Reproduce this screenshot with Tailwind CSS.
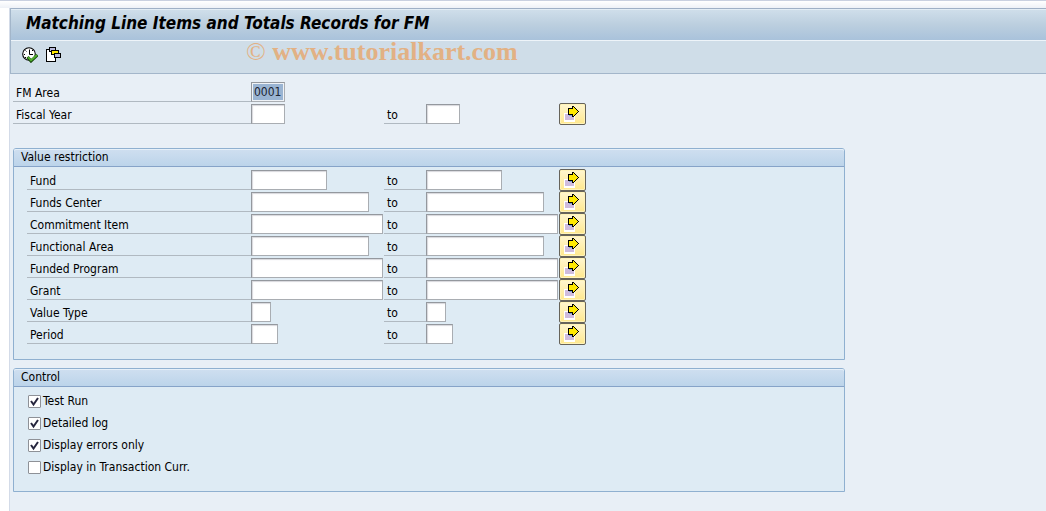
<!DOCTYPE html>
<html lang="en">
<head>
<meta charset="utf-8">
<title>Matching Line Items and Totals Records for FM</title>
<script src="https://cdn.jsdelivr.net/npm/@tailwindcss/browser@4"></script>
</head>
<body class="min-h-screen bg-white font-['DejaVu_Sans_Condensed','DejaVu_Sans',sans-serif] text-[12px] leading-4 text-black">

<svg class="hidden" aria-hidden="true">
  <symbol id="multi" viewBox="0 0 16 16" shape-rendering="crispEdges">
    <path fill="#fff" d="M0 7h11v9H0z"/>
    <path fill="#cfbcdd" d="M1 8h9v6H1z"/>
    <path fill="#7ba3d8" d="M5 8h5v2H5z"/>
    <path fill="#000" d="M8 0h2v1h1v1h1v1h1v1h1v1h1v1h-1v1h-1v1h-1v1h-1v1h-1v1H8V9H4V2h4z"/>
    <path fill="#ffe900" d="M9 1h1v1h1v1h1v1h1v1h1v1h-1v1h-1v1h-1v1h-1v1H9V8H5V3h4z"/>
  </symbol>
  <symbol id="tick" viewBox="0 0 13 13">
    <path fill="none" stroke="#26263e" stroke-width="2" d="M3 6l2.500 3.500L10 3"/>
  </symbol>
</svg>

<div class="h-2 border-t border-[#c9d0e0] bg-linear-to-b from-white to-[#eef1f7]"></div>

<main class="ml-[9px] min-h-[calc(100vh-8px)] border-l border-[#d3dbe8] bg-[#e8eff6]">
  <header class="relative border-l border-[#a3b6ca]">
    <div class="h-8 border-t border-[#9fb0c6] bg-linear-to-b from-[#d0dfeb] via-[#bccfdf] to-[#a9c2db] pl-[15px] pt-px shadow-[inset_0_1px_0_#e3edf5]">
      <h1 class="text-[17px] font-bold italic leading-[26px]">Matching Line Items and Totals Records for FM</h1>
    </div>
    <div class="flex h-[34px] items-center gap-2 border-b border-t border-b-[#a3b6ca] border-t-[#eef4f9] bg-[#cfdde8] pb-1 pl-[11px]">
      <button type="button" aria-label="Execute" class="size-4">
        <svg class="size-4" viewBox="0 0 16 16">
          <circle cx="7" cy="7" r="6.300" fill="#fff" stroke="#000" stroke-width="1.100"/>
          <path d="M7.500 2.500v5h3.500" fill="none" stroke="#000" stroke-width="1"/>
          <path d="M2 7.500h1M7.500 11v1M3.500 3.500l1 1M10 4l1-1M4 10l-1 1" stroke="#000" stroke-width="1"/>
          <path d="M5.500 10l3.500 4L15.500 8" fill="none" stroke="#123f08" stroke-width="3"/>
          <path d="M6 10.200l3 3.300L15 8" fill="none" stroke="#4fae2b" stroke-width="1.900"/>
        </svg>
      </button>
      <button type="button" aria-label="Get variant" class="size-4">
        <svg class="size-4" viewBox="0 0 16 16" shape-rendering="crispEdges">
          <path fill="#000" d="M0 2h10v13H0z"/>
          <path fill="#fff" d="M1 3h8v11H1z"/>
          <path fill="#000" d="M3 0h7v5H3z"/>
          <path fill="#b9b9dc" d="M4 1h5v3H4z"/>
          <path fill="#000" d="M5 3h8v5H5z"/>
          <path fill="#ffe900" d="M6 4h6v3H6z"/>
          <path fill="#000" d="M8 6h7v5H8z"/>
          <path fill="#b9b9dc" d="M9 7h5v3H9z"/>
        </svg>
      </button>
    </div>
    <p class="pointer-events-none absolute left-[235px] top-[29px] whitespace-nowrap font-['Liberation_Serif',serif] text-[26px] font-bold leading-[30px] text-[#e2b184]"><span class="font-normal">©</span> www.tutorialkart.com</p>
  </header>

  <form class="flex flex-col pl-[3px] pt-[6px]">
    <div class="grid auto-rows-[22px] grid-cols-[238px_133px_42px_133px_27px] items-end">
      <label for="fma" class="h-5 border-b border-[#b0b9c1] pl-[3px] pt-[3px]">FM Area</label>
      <input id="fma" value="0001" class="h-5 w-[34px] border border-[#a9adb2] border-l-[#94989e] border-t-[#94989e] bg-[#9ab4d2] px-0.5 text-[12px] text-[#1c2433] shadow-[inset_0_0_0_1px_#f0f3f7]">
      <span class="col-span-3"></span>

      <label for="fy" class="h-5 border-b border-[#b0b9c1] pl-[3px] pt-[3px]">Fiscal Year</label>
      <input id="fy" class="h-5 w-[34px] border border-[#a9adb2] border-l-[#94989e] border-t-[#94989e] bg-white px-0.5 shadow-[inset_1px_1px_1px_#d8d8dc]">
      <label for="fy2" class="h-5 border-b border-[#b0b9c1] pl-[3px] pt-[3px]">to</label>
      <input id="fy2" class="h-5 w-[34px] border border-[#a9adb2] border-l-[#94989e] border-t-[#94989e] bg-white px-0.5 shadow-[inset_1px_1px_1px_#d8d8dc]">
      <button type="button" aria-label="Multiple selection for Fiscal Year" class="-mb-px h-[22px] rounded-[2px] border border-[#66635a] bg-linear-to-b from-[#fff6d0] to-[#ffe88c] pl-1 shadow-[inset_0_0_0_1px_#fff3b8]"><svg class="size-4"><use href="#multi"/></svg></button>
    </div>

    <fieldset class="mt-6 max-w-[832px] rounded-t-[3px] border border-[#8fb0d0] bg-[#deebf4]">
      <div class="h-[18px] rounded-t-[2px] border-b border-[#86a3c8] bg-linear-to-b from-[#cfdff0] to-[#bcd4ea] pl-[7px] shadow-[inset_0_1px_0_#e6f0f9]">Value restriction</div>
      <div class="grid auto-rows-[22px] grid-cols-[224px_133px_42px_133px_27px] items-end pb-[15px] pl-[13px] pt-px">
        <label for="a1" class="h-5 border-b border-[#b0b9c1] pl-[3px] pt-[3px]">Fund</label>
        <input id="a1" class="h-5 w-[76px] border border-[#a9adb2] border-l-[#94989e] border-t-[#94989e] bg-white px-0.5 shadow-[inset_1px_1px_1px_#d8d8dc]">
        <label for="b1" class="h-5 border-b border-[#b0b9c1] pl-[3px] pt-[3px]">to</label>
        <input id="b1" class="h-5 w-[76px] border border-[#a9adb2] border-l-[#94989e] border-t-[#94989e] bg-white px-0.5 shadow-[inset_1px_1px_1px_#d8d8dc]">
        <button type="button" aria-label="Multiple selection for Fund" class="-mb-px h-[22px] rounded-[2px] border border-[#66635a] bg-linear-to-b from-[#fff6d0] to-[#ffe88c] pl-1 shadow-[inset_0_0_0_1px_#fff3b8]"><svg class="size-4"><use href="#multi"/></svg></button>

        <label for="a2" class="h-5 border-b border-[#b0b9c1] pl-[3px] pt-[3px]">Funds Center</label>
        <input id="a2" class="h-5 w-[118px] border border-[#a9adb2] border-l-[#94989e] border-t-[#94989e] bg-white px-0.5 shadow-[inset_1px_1px_1px_#d8d8dc]">
        <label for="b2" class="h-5 border-b border-[#b0b9c1] pl-[3px] pt-[3px]">to</label>
        <input id="b2" class="h-5 w-[118px] border border-[#a9adb2] border-l-[#94989e] border-t-[#94989e] bg-white px-0.5 shadow-[inset_1px_1px_1px_#d8d8dc]">
        <button type="button" aria-label="Multiple selection for Funds Center" class="-mb-px h-[22px] rounded-[2px] border border-[#66635a] bg-linear-to-b from-[#fff6d0] to-[#ffe88c] pl-1 shadow-[inset_0_0_0_1px_#fff3b8]"><svg class="size-4"><use href="#multi"/></svg></button>

        <label for="a3" class="h-5 border-b border-[#b0b9c1] pl-[3px] pt-[3px]">Commitment Item</label>
        <input id="a3" class="h-5 w-[132px] border border-[#a9adb2] border-l-[#94989e] border-t-[#94989e] bg-white px-0.5 shadow-[inset_1px_1px_1px_#d8d8dc]">
        <label for="b3" class="h-5 border-b border-[#b0b9c1] pl-[3px] pt-[3px]">to</label>
        <input id="b3" class="h-5 w-[132px] border border-[#a9adb2] border-l-[#94989e] border-t-[#94989e] bg-white px-0.5 shadow-[inset_1px_1px_1px_#d8d8dc]">
        <button type="button" aria-label="Multiple selection for Commitment Item" class="-mb-px h-[22px] rounded-[2px] border border-[#66635a] bg-linear-to-b from-[#fff6d0] to-[#ffe88c] pl-1 shadow-[inset_0_0_0_1px_#fff3b8]"><svg class="size-4"><use href="#multi"/></svg></button>

        <label for="a4" class="h-5 border-b border-[#b0b9c1] pl-[3px] pt-[3px]">Functional Area</label>
        <input id="a4" class="h-5 w-[118px] border border-[#a9adb2] border-l-[#94989e] border-t-[#94989e] bg-white px-0.5 shadow-[inset_1px_1px_1px_#d8d8dc]">
        <label for="b4" class="h-5 border-b border-[#b0b9c1] pl-[3px] pt-[3px]">to</label>
        <input id="b4" class="h-5 w-[118px] border border-[#a9adb2] border-l-[#94989e] border-t-[#94989e] bg-white px-0.5 shadow-[inset_1px_1px_1px_#d8d8dc]">
        <button type="button" aria-label="Multiple selection for Functional Area" class="-mb-px h-[22px] rounded-[2px] border border-[#66635a] bg-linear-to-b from-[#fff6d0] to-[#ffe88c] pl-1 shadow-[inset_0_0_0_1px_#fff3b8]"><svg class="size-4"><use href="#multi"/></svg></button>

        <label for="a5" class="h-5 border-b border-[#b0b9c1] pl-[3px] pt-[3px]">Funded Program</label>
        <input id="a5" class="h-5 w-[132px] border border-[#a9adb2] border-l-[#94989e] border-t-[#94989e] bg-white px-0.5 shadow-[inset_1px_1px_1px_#d8d8dc]">
        <label for="b5" class="h-5 border-b border-[#b0b9c1] pl-[3px] pt-[3px]">to</label>
        <input id="b5" class="h-5 w-[132px] border border-[#a9adb2] border-l-[#94989e] border-t-[#94989e] bg-white px-0.5 shadow-[inset_1px_1px_1px_#d8d8dc]">
        <button type="button" aria-label="Multiple selection for Funded Program" class="-mb-px h-[22px] rounded-[2px] border border-[#66635a] bg-linear-to-b from-[#fff6d0] to-[#ffe88c] pl-1 shadow-[inset_0_0_0_1px_#fff3b8]"><svg class="size-4"><use href="#multi"/></svg></button>

        <label for="a6" class="h-5 border-b border-[#b0b9c1] pl-[3px] pt-[3px]">Grant</label>
        <input id="a6" class="h-5 w-[132px] border border-[#a9adb2] border-l-[#94989e] border-t-[#94989e] bg-white px-0.5 shadow-[inset_1px_1px_1px_#d8d8dc]">
        <label for="b6" class="h-5 border-b border-[#b0b9c1] pl-[3px] pt-[3px]">to</label>
        <input id="b6" class="h-5 w-[132px] border border-[#a9adb2] border-l-[#94989e] border-t-[#94989e] bg-white px-0.5 shadow-[inset_1px_1px_1px_#d8d8dc]">
        <button type="button" aria-label="Multiple selection for Grant" class="-mb-px h-[22px] rounded-[2px] border border-[#66635a] bg-linear-to-b from-[#fff6d0] to-[#ffe88c] pl-1 shadow-[inset_0_0_0_1px_#fff3b8]"><svg class="size-4"><use href="#multi"/></svg></button>

        <label for="a7" class="h-5 border-b border-[#b0b9c1] pl-[3px] pt-[3px]">Value Type</label>
        <input id="a7" class="h-5 w-5 border border-[#a9adb2] border-l-[#94989e] border-t-[#94989e] bg-white px-0.5 shadow-[inset_1px_1px_1px_#d8d8dc]">
        <label for="b7" class="h-5 border-b border-[#b0b9c1] pl-[3px] pt-[3px]">to</label>
        <input id="b7" class="h-5 w-5 border border-[#a9adb2] border-l-[#94989e] border-t-[#94989e] bg-white px-0.5 shadow-[inset_1px_1px_1px_#d8d8dc]">
        <button type="button" aria-label="Multiple selection for Value Type" class="-mb-px h-[22px] rounded-[2px] border border-[#66635a] bg-linear-to-b from-[#fff6d0] to-[#ffe88c] pl-1 shadow-[inset_0_0_0_1px_#fff3b8]"><svg class="size-4"><use href="#multi"/></svg></button>

        <label for="a8" class="h-5 border-b border-[#b0b9c1] pl-[3px] pt-[3px]">Period</label>
        <input id="a8" class="h-5 w-[27px] border border-[#a9adb2] border-l-[#94989e] border-t-[#94989e] bg-white px-0.5 shadow-[inset_1px_1px_1px_#d8d8dc]">
        <label for="b8" class="h-5 border-b border-[#b0b9c1] pl-[3px] pt-[3px]">to</label>
        <input id="b8" class="h-5 w-[27px] border border-[#a9adb2] border-l-[#94989e] border-t-[#94989e] bg-white px-0.5 shadow-[inset_1px_1px_1px_#d8d8dc]">
        <button type="button" aria-label="Multiple selection for Period" class="-mb-px h-[22px] rounded-[2px] border border-[#66635a] bg-linear-to-b from-[#fff6d0] to-[#ffe88c] pl-1 shadow-[inset_0_0_0_1px_#fff3b8]"><svg class="size-4"><use href="#multi"/></svg></button>
      </div>
    </fieldset>

    <fieldset class="mt-2 max-w-[832px] rounded-t-[3px] border border-[#8fb0d0] bg-[#deebf4]">
      <div class="h-[18px] rounded-t-[2px] border-b border-[#86a3c8] bg-linear-to-b from-[#cfdff0] to-[#bcd4ea] pl-[7px] shadow-[inset_0_1px_0_#e6f0f9]">Control</div>
      <div class="flex flex-col items-start pb-[13px] pl-[14px] pt-[3px]">
        <label class="relative flex h-[22px] items-center gap-0.5"><input type="checkbox" checked class="peer size-[13px] appearance-none rounded-[1px] border border-[#8e9197] bg-white"><svg class="pointer-events-none absolute left-0 hidden size-[13px] peer-checked:block"><use href="#tick"/></svg><span>Test Run</span></label>
        <label class="relative flex h-[22px] items-center gap-0.5"><input type="checkbox" checked class="peer size-[13px] appearance-none rounded-[1px] border border-[#8e9197] bg-white"><svg class="pointer-events-none absolute left-0 hidden size-[13px] peer-checked:block"><use href="#tick"/></svg><span>Detailed log</span></label>
        <label class="relative flex h-[22px] items-center gap-0.5"><input type="checkbox" checked class="peer size-[13px] appearance-none rounded-[1px] border border-[#8e9197] bg-white"><svg class="pointer-events-none absolute left-0 hidden size-[13px] peer-checked:block"><use href="#tick"/></svg><span>Display errors only</span></label>
        <label class="relative flex h-[22px] items-center gap-0.5"><input type="checkbox" class="peer size-[13px] appearance-none rounded-[1px] border border-[#8e9197] bg-white"><svg class="pointer-events-none absolute left-0 hidden size-[13px] peer-checked:block"><use href="#tick"/></svg><span>Display in Transaction Curr.</span></label>
      </div>
    </fieldset>
  </form>
</main>
</body>
</html>
